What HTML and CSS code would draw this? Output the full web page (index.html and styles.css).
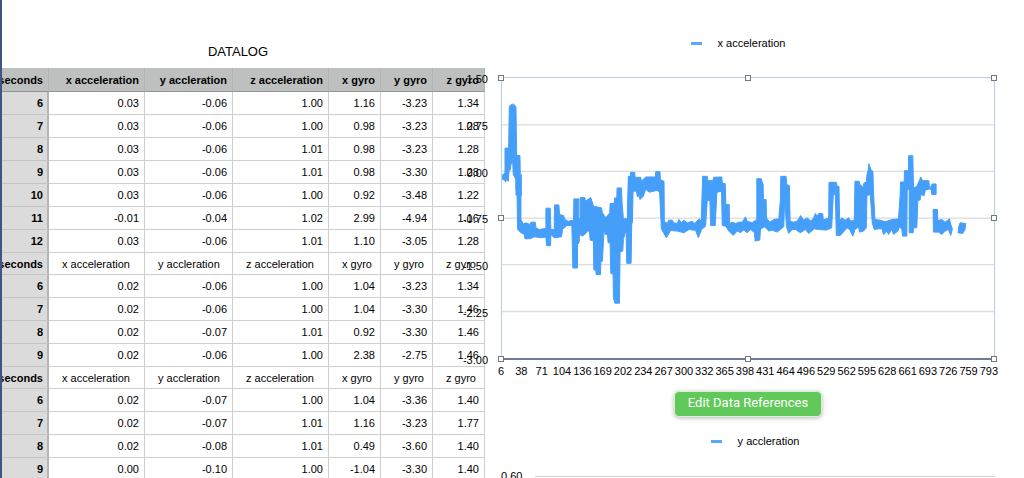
FILE: index.html
```
<!DOCTYPE html>
<html lang="en">
<head>
<meta charset="utf-8">
<title>DATALOG</title>
<link rel="stylesheet" href="styles.css">
</head>
<body>
<main class="canvas">
  <section class="sheet">
    <table class="log">
      <caption>DATALOG</caption>
      <colgroup><col class="c-sec"><col class="c-xa"><col class="c-ya"><col class="c-za"><col class="c-g"><col class="c-g"><col class="c-last"></colgroup>
      <thead>
        <tr><th scope="col">seconds</th><th scope="col">x acceleration</th><th scope="col">y accleration</th><th scope="col">z acceleration</th><th scope="col">x gyro</th><th scope="col">y gyro</th><th scope="col">z gyro</th></tr>
      </thead>
      <tbody>
        <tr><th scope="row">6</th><td>0.03</td><td>-0.06</td><td>1.00</td><td>1.16</td><td>-3.23</td><td>1.34</td></tr>
        <tr><th scope="row">7</th><td>0.03</td><td>-0.06</td><td>1.00</td><td>0.98</td><td>-3.23</td><td>1.28</td></tr>
        <tr><th scope="row">8</th><td>0.03</td><td>-0.06</td><td>1.01</td><td>0.98</td><td>-3.23</td><td>1.28</td></tr>
        <tr><th scope="row">9</th><td>0.03</td><td>-0.06</td><td>1.01</td><td>0.98</td><td>-3.30</td><td>1.28</td></tr>
        <tr><th scope="row">10</th><td>0.03</td><td>-0.06</td><td>1.00</td><td>0.92</td><td>-3.48</td><td>1.22</td></tr>
        <tr><th scope="row">11</th><td>-0.01</td><td>-0.04</td><td>1.02</td><td>2.99</td><td>-4.94</td><td>1.16</td></tr>
        <tr><th scope="row">12</th><td>0.03</td><td>-0.06</td><td>1.01</td><td>1.10</td><td>-3.05</td><td>1.28</td></tr>
        <tr class="names"><th scope="row">seconds</th><td>x acceleration</td><td>y accleration</td><td>z acceleration</td><td>x gyro</td><td>y gyro</td><td>z gyro</td></tr>
        <tr><th scope="row">6</th><td>0.02</td><td>-0.06</td><td>1.00</td><td>1.04</td><td>-3.23</td><td>1.34</td></tr>
        <tr><th scope="row">7</th><td>0.02</td><td>-0.06</td><td>1.00</td><td>1.04</td><td>-3.30</td><td>1.46</td></tr>
        <tr><th scope="row">8</th><td>0.02</td><td>-0.07</td><td>1.01</td><td>0.92</td><td>-3.30</td><td>1.46</td></tr>
        <tr><th scope="row">9</th><td>0.02</td><td>-0.06</td><td>1.00</td><td>2.38</td><td>-2.75</td><td>1.46</td></tr>
        <tr class="names"><th scope="row">seconds</th><td>x acceleration</td><td>y accleration</td><td>z acceleration</td><td>x gyro</td><td>y gyro</td><td>z gyro</td></tr>
        <tr><th scope="row">6</th><td>0.02</td><td>-0.07</td><td>1.00</td><td>1.04</td><td>-3.36</td><td>1.40</td></tr>
        <tr><th scope="row">7</th><td>0.02</td><td>-0.07</td><td>1.01</td><td>1.16</td><td>-3.23</td><td>1.77</td></tr>
        <tr><th scope="row">8</th><td>0.02</td><td>-0.08</td><td>1.01</td><td>0.49</td><td>-3.60</td><td>1.40</td></tr>
        <tr><th scope="row">9</th><td>0.00</td><td>-0.10</td><td>1.00</td><td>-1.04</td><td>-3.30</td><td>1.40</td></tr>
      </tbody>
    </table>
  </section>

  <section class="charts">
    <figure class="chart">
      <figcaption class="legend"><span class="swatch"></span>x acceleration</figcaption>
      <div class="plot selected">
        <ul class="y-axis"><li>1.50</li><li>0.75</li><li>0.00</li><li>-0.75</li><li>-1.50</li><li>-2.25</li><li>-3.00</li></ul>
        <svg class="series" viewBox="0 0 1479 843" preserveAspectRatio="none" role="img" aria-label="x acceleration over time">
          <path class="grid" d="M0 141H1479M0 281H1479M0 422H1479M0 562H1479M0 703H1479"/>
          <g class="area">
            <path transform="translate(-33 -39)" d="M35 330L42 325V250H53L55 125 58 121 67 117 75 125 77 272H87L88 330H91V392H75V345L67 330 65 290 60 300 58 315 54 318 52 350 46 345 44 352 40 345H35Z"/>
            <path transform="translate(-33 306)" d="M75 0H90V120L97 133 105 130 118 135 120 128H133L135 145 145 150 165 147V86H178L180 150H190L191 76H204L206 105 218 108 222 120 232 125 248 122 249 58H264V118H268V54H282L284 65 300 54 308 80 332 85 335 100 345 115 357 100 358 72H370L372 55H378L379 25H392L394 70 398 118H412L413 -8H425L423 130 421 252H408L406 150 398 180 396 215 388 218 386 372H372L368 355 367 285 360 282 358 190H352L350 165H343L340 145 335 245 330 250 329 286H316L315 272H309L308 185 298 182 296 155H290L285 162 275 170 266 165 265 190 260 195V266H246L243 138H228L215 150 212 172 190 175 180 165 179 199H167L165 173 150 175 130 172 118 178H102L100 165 90 160 80 150 78 33 75 30Z"/>
            <path transform="translate(357 216)" d="M20 180L23 90V80H29V68H42L43 83H60L62 95 75 82H104L105 66H118L119 90 130 95 131 215 140 222 144 212H156L158 220 170 222 175 210 182 220 190 212 200 220 215 215 222 222 236 208 242 215 246 80H260L262 93H277L279 83 304 82 305 100 314 102 316 165H326L327 222 335 218 345 222 355 218H361V250L350 245 338 258 325 245 315 230 305 228 303 125 289 128 284 228H270L268 153H260L255 230 243 240 233 265 225 243 205 240 190 250 170 245 150 243 137 265 122 238 117 130 110 122 85 128 75 118 68 140 58 150 55 138 50 142 47 125H37L35 220H31L30 330H20Z"/>
            <path transform="translate(717 216)" d="M0 218H5L15 202 20 215 35 220 45 212H49V87H62L68 105 69 150H77L78 205 88 218 100 210 115 208 120 150 121 80H137L139 105 147 108 149 215 160 218 170 215 181 198 190 212 200 205 212 215 220 205 225 192 230 200 235 192H247L249 212 258 207H265L266 98H288L290 110H296L298 215 304 205 315 212 325 205 331 215V243L320 235 312 245 300 258H288L285 135H279L274 235 258 242 235 240 222 238 205 252 195 240 180 250 165 240H155L145 252 138 232 133 140 130 232 120 240 110 248 95 242 85 245 72 232 60 240 58 272 44 275 42 250 30 240 20 250 10 242 0 248Z"/>
            <path transform="translate(1047 186)" d="M0 245L12 242 14 125H27L29 135 36 140 38 150 41 130 48 128 50 105 54 90 56 72 62 90 68 95 70 160 74 240 90 242 105 247 125 240 145 238 150 165 151 127H162L163 93H175V48H188L190 145 200 140 208 122 212 112 217 123H236L238 140 242 143 246 133H258V165H245L243 150 238 148 225 152 222 168 212 165 210 182H203L200 265H190L189 280H177V150H171L170 290H157L155 270 148 262 143 275 130 285 125 270 115 285 110 275 100 285 95 268H85L72 270 66 250 60 165 50 168 48 265 40 275 28 278 25 262 14 270 8 290 0 275Z"/>
            <path transform="translate(1047 186)" d="M249 210H262L263 243 275 240 285 248 298 238 302 255 307 268 302 288 295 270 285 275 275 285 265 278H250ZM326 262L330 250 347 252 345 270 338 282 324 280Z"/>
          </g>
        </svg>
        <i class="handle top left"></i><i class="handle top center"></i><i class="handle top right"></i>
        <i class="handle middle left"></i><i class="handle middle right"></i>
        <i class="handle bottom left"></i><i class="handle bottom center"></i><i class="handle bottom right"></i>
      </div>
      <ul class="x-axis"><li>6</li><li>38</li><li>71</li><li>104</li><li>136</li><li>169</li><li>202</li><li>234</li><li>267</li><li>300</li><li>332</li><li>365</li><li>398</li><li>431</li><li>464</li><li>496</li><li>529</li><li>562</li><li>595</li><li>628</li><li>661</li><li>693</li><li>726</li><li>759</li><li>793</li></ul>
    </figure>
    <button class="edit" type="button">Edit Data References</button>
    <figure class="chart second">
      <figcaption class="legend"><span class="swatch"></span>y accleration</figcaption>
      <div class="tick"><span>0.60</span><span class="rule"></span></div>
    </figure>
  </section>
</main>
</body>
</html>
```
FILE: styles.css
```
* { box-sizing: border-box; }

body {
  margin: 0;
  height: 100vh;
  overflow: hidden;
  background: #fff;
  color: #000;
  font: 11px/14px "Liberation Sans", Arial, sans-serif;
}

.canvas {
  display: flex;
  min-height: 100vh;
  border-left: 2px solid #3f5680;
}

/* The sheet is scrolled sideways a little, so its first column is cut. */
.sheet {
  flex: none;
  width: 483px;
  overflow: hidden;
}

.log {
  width: 497px;
  margin-left: -14px;
  table-layout: fixed;
  border-collapse: separate;
  border-spacing: 0;
}

.log caption {
  padding: 43px 0 8px 3px;
  font-size: 13px;
  line-height: 17px;
}

.c-sec { width: 61px; }
.c-xa { width: 96px; }
.c-ya { width: 88px; }
.c-za { width: 96px; }
.c-g { width: 52px; }
.c-last { width: 52px; }

.log th,
.log td {
  height: 23px;
  padding: 0 5px 0 0;
  border-right: 1px solid #cfcfcf;
  border-bottom: 1px solid #cfcfcf;
  text-align: right;
  white-space: nowrap;
}

.log thead th {
  height: 24px;
  background: #bdc0bf;
  border-right-color: #b1b4b3;
  border-bottom-color: #929493;
}

.log tbody th {
  background: #dbdbdb;
  border-right: 2px solid #b5b5b5;
  border-bottom-color: #c4c4c4;
  padding-right: 4px;
}

.log .names th,
.log .names td { height: 22px; }

.log .names td {
  padding: 0 0 0 13px;
  text-align: left;
}

.charts {
  flex: 1;
  display: flex;
  flex-direction: column;
  padding: 36px 29px 0 16px;
}

.chart { margin: 0; }

.legend {
  display: flex;
  align-items: center;
  justify-content: center;
  gap: 16px;
  padding-right: 20px;
}

.swatch {
  width: 11px;
  height: 3px;
  background: #58a9f8;
}

.plot {
  position: relative;
  margin-top: 27px;
  height: 283px;
  border: 1px solid #b6cdf3;
  border-bottom: 2px solid #6f7896;
}

.series {
  display: block;
  width: 100%;
  height: 100%;
}

.grid {
  fill: none;
  stroke: #dcdcdc;
  stroke-width: 4;
}

.area {
  fill: #459ff9;
  stroke: #459ff9;
  stroke-width: 3;
  stroke-linejoin: round;
}

.y-axis,
.x-axis {
  display: flex;
  justify-content: space-between;
  margin: 0;
  padding: 0;
  list-style: none;
}

/* Tick labels run out over the sheet beside the chart. */
.y-axis {
  position: absolute;
  top: -6px;
  bottom: -9px;
  right: 100%;
  flex-direction: column;
  padding-right: 14px;
  text-align: right;
}

.x-axis { padding: 4px 6px 0 0; }

.x-axis li {
  display: flex;
  justify-content: center;
  width: 0;
}

.handle {
  position: absolute;
  width: 6px;
  height: 6px;
  border: 1px solid #777;
  background: #fff;
}

.handle.top { top: -3px; }
.handle.middle { top: calc(50% - 3px); }
.handle.bottom { bottom: -4px; }
.handle.left { left: -4px; }
.handle.center { left: calc(50% - 3px); }
.handle.right { right: -3px; }

.edit {
  align-self: center;
  margin: 13px 0 17px;
  padding: 3px 13px 5px;
  border: 1px solid #d9efd8;
  border-radius: 5px;
  background: #61c95a;
  box-shadow: 0 1px 4px rgba(0, 0, 0, 0.3);
  color: #fff;
  font: 13px/16px Roboto, sans-serif;
}

.second .legend { padding-left: 34px; }

.tick {
  display: flex;
  align-items: center;
  gap: 13px;
  margin-top: 21px;
}

.rule {
  flex: 1;
  height: 1px;
  background: #cfcfcf;
}
```
